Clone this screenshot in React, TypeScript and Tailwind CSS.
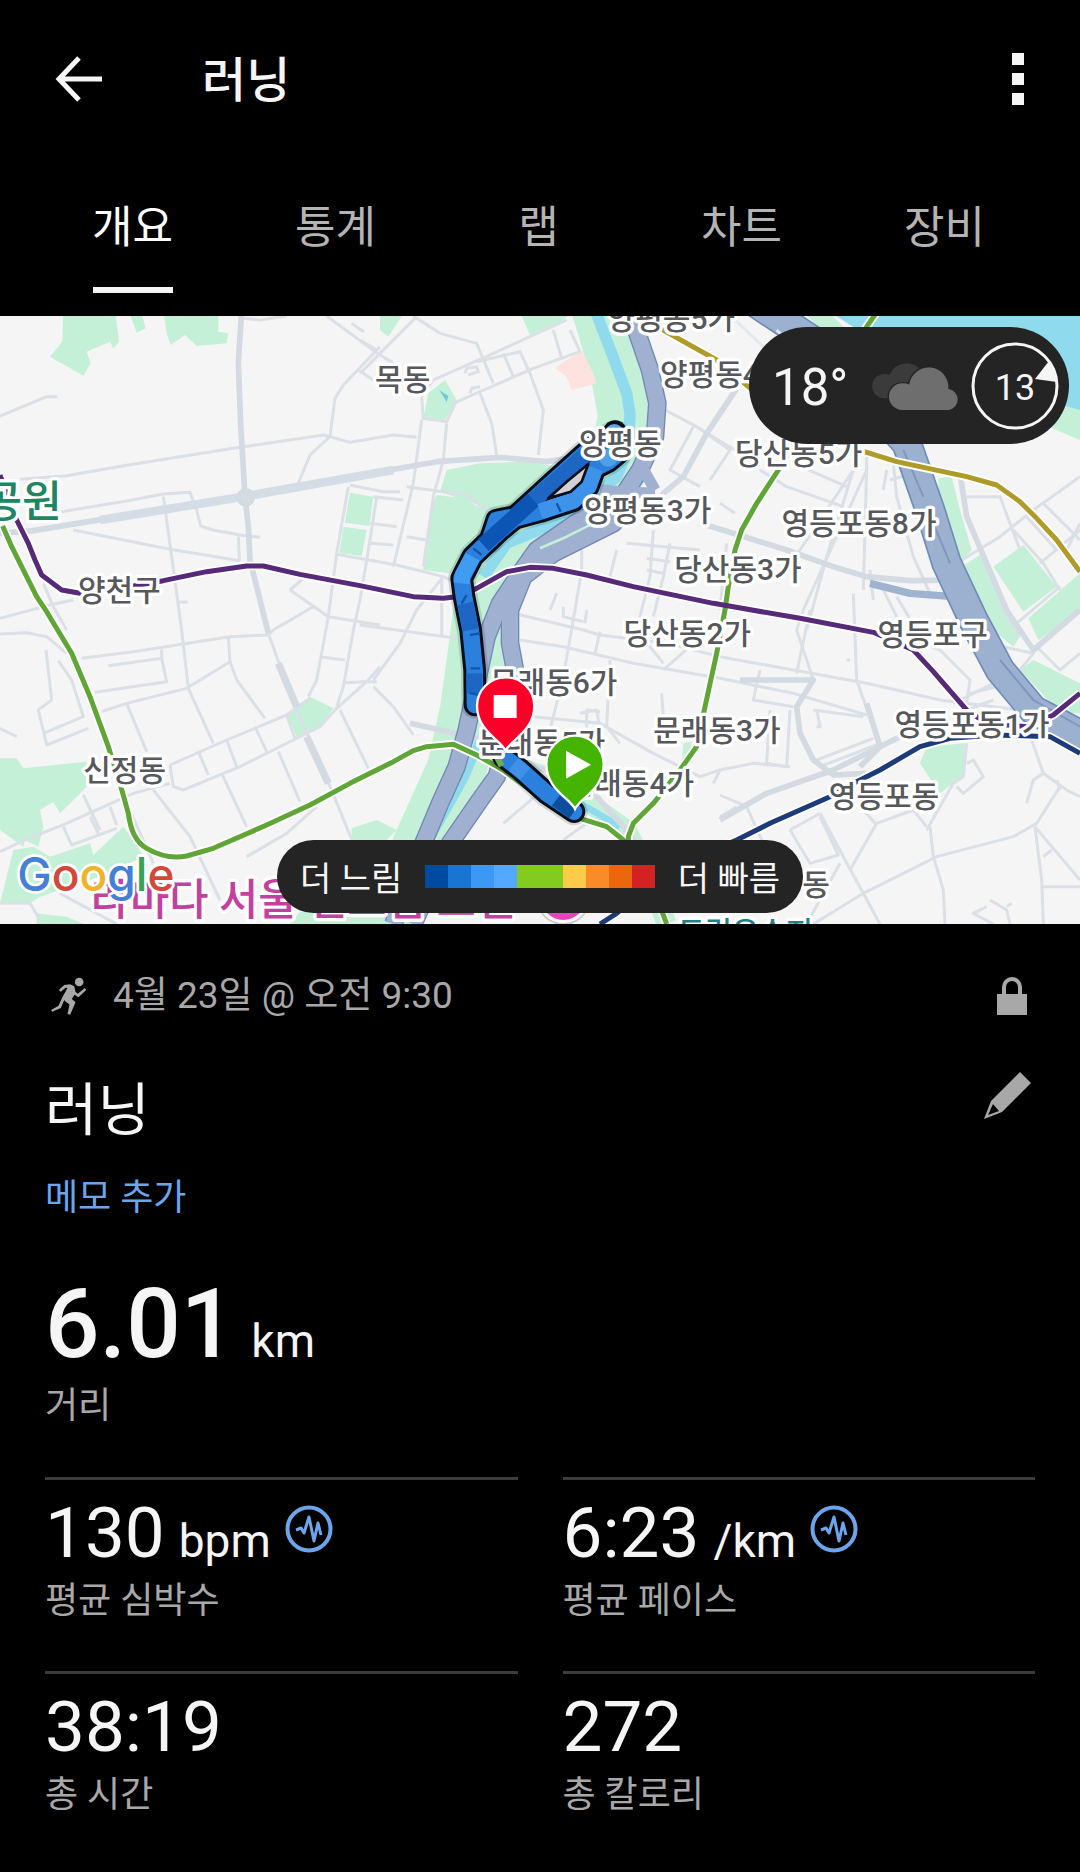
import React from 'react';

const TABS = ['개요', '통계', '랩', '차트', '장비'];

const PACE_COLORS = [
    '#004a9f', '#1a74d2', '#3d97f5', '#54a9ff', '#84cb20',
    '#84cb20', '#fbcb4b', '#fa8b29', '#eb660d', '#d42222',
];

const STATS = [
    { value: '130', unit: 'bpm', label: '평균 심박수', chart: true },
    { value: '6:23', unit: '/km', label: '평균 페이스', chart: true },
    { value: '38:19', unit: '', label: '총 시간', chart: false },
    { value: '272', unit: '', label: '총 칼로리', chart: false },
];

// Map geometry, three units per screen pixel
const PARKS = [
    '190,0 345,0 357,95 340,115 330,95 260,125 272,160 250,197 150,140 187,95',
    '385,0 422,0 437,55 410,68',
    '490,0 655,0 655,65 685,70 680,100 590,108 555,75 512,105 500,70',
    '1050,548 1120,560 1108,648 1035,638',
    '1030,650 1100,660 1085,738 1018,728',
    '1140,18 1205,18 1165,80 1140,60',
    '1565,18 1705,18 1680,35 1590,75',
    '1335,210 1370,270 1335,330 1270,325 1285,250',
    '1340,480 1440,460 1570,455 1680,470 1540,590 1480,610 1450,590 1320,545',
    '1310,555 1390,565 1470,610 1440,680 1350,790 1270,780 1290,600',
    '0,1345 50,1345 70,1375 260,1355 260,1430 180,1510 160,1475 120,1500 130,1550 115,1610 75,1590 70,1610 0,1560',
    '0,1780 40,1620 100,1610 150,1640 270,1600 280,1635 370,1550 400,1590 430,1640 300,1700 120,1760 90,1780',
    '110,1842 110,1810 200,1820 250,1842',
    '860,1210 930,1160 1000,1195 960,1250 890,1280',
    '1055,1555 1130,1530 1190,1560 1150,1600 1055,1600',
    '870,1842 900,1805 1080,1805 1200,1842',
    '2400,0 2480,0 2560,80 2480,70',
    '3120,340 3140,280 3240,295 3240,390',
    '2815,505 2855,500 2880,600 2915,720 2880,760 2850,700 2815,580',
    '2885,770 2940,735 2985,810 3020,880 3060,980 3040,1010 2990,970 2930,850',
    '2980,770 3070,705 3170,830 3070,905',
    '3085,925 3240,790 3240,905 3115,990',
    '3060,1080 3100,1050 3240,1120 3240,1210 3180,1210',
    '2780,1310 2895,1300 2890,1400 2860,1420 2820,1450 2780,1390 2760,1360',
    '2050,1300 2075,1295 2065,1370 2045,1370',
    '1550,1340 1650,1370 1600,1400',
];

const MAIN_ROADS = [
    'M0 670 100 662 490 598 730 560 1040 505 1140 485 1310 455 1500 442 1640 455 1740 440',
    'M725 0 715 160 722 340 735 560 745 650 750 750 760 790 805 970',
    'M2100 640 2200 670 2360 720 2500 770 2600 800 2730 812 2860 810',
    'M2240 190 2120 370 2050 500 1990 550 1940 620',
    'M2220 1110 2440 1110 2390 1190 2400 1270 2440 1350 2500 1395 2600 1390',
    'M1230 1240 1500 1300',
    'M2160 1530 2300 1450 2500 1380 2700 1280',
    'M1500 1345 1640 1380 1790 1460 1880 1560 1940 1640',
    'M2880 490 2900 620 2960 760 3020 900 3100 1020 3240 900',
    'M2600 1180 2640 1310 2580 1370',
];

const MINOR_ROADS = [
    'M0 318 140 260 172 260',
    'M60 508 200 497 380 466 700 415 970 375 1050 397 1180 375 1250 382',
    'M185 605 380 573 490 552 570 547 590 600 602 648 640 660 720 675 780 682',
    'M490 560 515 740 545 960 565 1135 640 1300',
    'M220 660 510 718 720 752',
    'M715 680 718 752',
    'M980 18 1125 125 1180 160',
    'M730 25 780 30 860 18',
    'M1140 110 1030 225 1005 265 990 380 930 435 895 520',
    'M1055 40 1092 66',
    'M1075 180 1120 210',
    'M1050 525 1150 545 1200 545',
    'M1045 530 1010 730 985 920 950 1110 925 1160',
    'M1130 560 1110 690 1080 870 1060 960 1030 1130 1010 1190',
    'M1010 733 1190 765 1330 800 1370 820',
    'M870 840 985 920 1140 945',
    'M870 840 905 810',
    'M940 890 820 960 805 975 690 980 400 1025 245 1045',
    'M0 925 150 885 220 870',
    'M130 820 160 890 200 960',
    'M530 877 563 876',
    'M0 972 80 968 140 980 200 1030',
    'M138 1020 155 1170 115 1200 140 1305 265 1255',
    'M175 1052 215 1110 250 1220 130 1270',
    'M325 1067 485 1045 500 1115 285 1147',
    'M485 1018 485 1045',
    'M305 1205 380 1180 560 1135 690 1055 685 980',
    'M690 1055 710 1110 795 1225',
    'M805 970 880 1180 930 1290 990 1430 1060 1600',
    'M380 1180 440 1325',
    'M510 1365 680 1290 860 1215 930 1165',
    'M510 1365 520 1430 550 1440 720 1370 880 1290 960 1250 1010 1195 1100 1115 1140 1070',
    'M595 1325 625 1395 M680 1290 710 1370 M765 1250 800 1325 M860 1215 885 1285',
    'M665 1390 740 1550 M835 1325 900 1475 M1020 1200 1105 1375',
    'M0 1625 75 1590 200 1540 400 1450 510 1420',
    'M190 1550 215 1605 350 1555 M270 1520 295 1570 M330 1490 350 1545',
    'M250 1455 300 1560 M460 1440 570 1580 660 1770 M385 1490 460 1660',
    'M740 1640 860 1570 950 1490',
    'M0 1255 50 1280',
    'M0 1780 90 1780 120 1830 M180 1750 350 1842',
    'M960 1040 1035 1050 M1030 1118 1100 1115',
    'M1080 190 1250 20 M1080 90 1130 120',
    'M1240 18 1320 70 1430 100 1480 220',
    'M1270 330 1265 260 1300 210 1480 130 1700 30',
    'M1360 280 1440 245 1600 175 1740 125 1710 60',
    'M1510 130 1540 200 M1430 155 1560 125 1590 190 1630 300 1615 435',
    'M1265 330 1240 520 1180 770 M1340 340 1330 450 1300 560 1270 770',
    'M1440 250 1475 340 1490 435 M1270 325 1340 335 1370 270',
    'M1395 190 1400 175 1430 170 1435 185 1405 195 M1410 250 1415 235 1440 230',
    'M1120 560 1210 570 M1110 640 1190 650 M1110 700 1180 705 M1220 530 1400 555 1470 610',
    'M1660 60 1685 145 M1220 680 1280 690',
    'M1325 800 1325 980 M1330 800 1250 900 1200 1000 1120 1110 M1080 945 1370 985',
    'M1120 1130 1180 1190 1240 1275 M1080 1115 1130 1115',
    'M1745 680 1745 780 1725 900 1690 1100 1640 1300 M1850 720 1830 800 M1670 850 1650 900',
    'M1995 300 2090 350 2220 430 M2080 350 2010 480 2100 530 M2090 350 2190 420 2130 510',
    'M1960 660 1950 800 1910 960 1990 1060 M2010 700 1990 800 1960 920',
    'M1940 745 2010 755 M1940 780 1990 790 M1880 700 2100 720',
    'M1540 910 1750 960 1800 975 2000 1000 2160 1040 2380 1080 2600 1120 2820 1170 3060 1200',
    'M1560 990 1690 1010 1900 1060 2160 1105 2380 1150 2600 1215',
    'M1760 900 1755 940 M1690 890 1690 920 1750 935 M1800 965 1785 1030',
    'M1830 1050 1820 1250 1860 1300 M1600 1220 1800 1240 1960 1330 2100 1400 2160 1380',
    'M1985 1150 1990 1220 M1740 1210 1790 1200 1800 1260 M1990 1080 2080 1000 2100 960',
    'M1760 1270 1760 1200 1800 1205 M2140 1420 2160 1380 2260 1360 2370 1370',
    'M1510 1540 1640 1430 M1690 1590 1760 1540',
    'M2380 750 2560 480 M2440 1110 2390 960 2410 900 2600 480 2600 440',
    'M2420 960 2480 740 2560 480 M2590 840 2600 470 M2660 480 2650 540 M2670 510 2720 495',
    'M2280 480 2360 530 2530 590 M2380 460 2540 530 M2160 580 2205 610',
    'M2560 850 2570 1110 2640 1310 M2610 780 2620 870 M2680 460 2690 560 2740 740 2790 850',
    'M2690 860 2750 960 M2640 820 2720 980 2820 1020 2910 1110 2900 1180',
    'M2180 700 2160 900 M2430 900 2390 1090 M2380 1190 2260 1170 2280 1080',
    'M2440 1200 2590 1220 M2450 1250 2460 1250 2450 1200 M2310 1200 2300 1360 2360 1370 2370 1200',
    'M2450 1350 2620 1285 M2460 1370 2640 1300 M2540 1050 2550 1050',
    'M2160 1455 2240 1490 2290 1600 M2160 1520 2210 1490 M2370 1560 2430 1660 2515 1635 2460 1520',
    'M2460 1510 2530 1640 2640 1842 M2370 1560 2460 1510 M2550 1680 2630 1540 2740 1500 2780 1550',
    'M2590 1500 2630 1545 M2780 1560 2860 1420 2890 1400 2900 1300',
    'M2790 1550 2800 1640 2830 1740 2835 1842 M2440 1842 2590 1750 2810 1640 3040 1580 3110 1540 3180 1430',
    'M2870 1430 2890 1450 2950 1400 2920 1350 2900 1360',
    'M3095 1290 3130 1390 3200 1440 3240 1460 M3130 1390 3100 1410 3080 1480 M3170 1410 3180 1440',
    'M3105 1550 3240 1710 M3105 1550 3125 1710 3130 1842 M3125 1730 3240 1730 M3130 1640 3155 1620',
    'M2970 1770 3020 1800 3030 1842 M3020 1790 3035 1780 M2960 1790 2920 1810 2980 1842 M2520 1660 2420 1842',
    'M2870 760 3000 680 3100 600 3240 500 M2900 560 3000 560 3060 720',
    'M3040 660 3130 760 3180 840 M3080 620 3170 720 M3120 760 3240 660 M3130 580 3240 690',
    'M3110 1010 3180 1080 3240 1030 M2960 1000 3100 1030 3060 1080 M2860 1180 3000 1110 M3240 640 3200 720',
    'M2910 1150 2990 1130 M2900 1200 2980 1170',
    'M3000 880 3060 980 M3180 830 3050 940',
];

const HIGHWAYS = [
    'M1895 20 1950 180 1972 280 1965 380 1920 480 1860 570 1740 630 1610 720 1560 790 1500 880 1460 980 1430 1120 1400 1260 1370 1370 1320 1480 1270 1600 1180 1842',
    'M1880 600 1840 640 1780 670 1660 730 1570 800 1530 900 1530 1000 1545 1080 1530 1260 1490 1400 1440 1470 1350 1600 1240 1842',
];

const RIVER_ROAD = 'M2270 -20 2450 100 2720 400 2790 600 2840 760 2920 930 3000 1080 3100 1200 3270 1290';

const LINES = [
    {
        color: '#60a637',
        d: 'M8 648 35 710 75 790 110 860 140 905 215 1030 270 1160 325 1310 360 1420 385 1510Q395 1590 440 1615 500 1650 560 1638L640 1615 800 1545 930 1485 1050 1420 1180 1355 1240 1322 1280 1310 1360 1303 1430 1335 1510 1380 1590 1440 1730 1522 1820 1550 1870 1590 1940 1680 2000 1842',
    },
    {
        color: '#60a637',
        d: 'M1885 1610 1885 1580 1900 1540 1960 1480 2040 1380 2090 1310 2115 1190 2150 1030 2175 900 2185 830 2205 720 2225 660 2270 580 2335 480 2480 250 2600 50 2635 0',
    },
    {
        color: '#562a78',
        d: 'M0 495 50 630 85 700 105 750 125 795 185 840 240 850 400 828 490 812 620 785 740 768 790 768 900 793 1080 827 1240 860 1330 865 1370 860 1430 835 1520 785 1590 772 1660 775 1760 795 1900 830 2140 880 2400 925 2620 967 2740 1020 2800 1085 2900 1200 2960 1240 3080 1250 3160 1215 3240 1150',
    },
    { color: '#ae9b29', d: 'M1980 55 2150 150 2400 360 2600 427 2690 455 2900 500 2990 525 3060 575 3110 625 3170 690 3240 785' },
    { color: '#1d3a79', d: 'M1800 1842 1850 1810 2000 1680 2210 1590 2310 1540 2490 1460 2570 1415 2640 1380 2760 1310 2850 1285 2990 1275 3150 1280 3240 1330' },
];

const PLACES = [
    { name: '목동', x: 1208, y: 240 },
    { name: '양평동5가', x: 2014, y: 56 },
    { name: '양평동4가', x: 2171, y: 224 },
    { name: '양평동', x: 1861, y: 432 },
    { name: '양평동3가', x: 1943, y: 632 },
    { name: '당산동5가', x: 2396, y: 462 },
    { name: '영등포동8가', x: 2577, y: 672 },
    { name: '당산동3가', x: 2214, y: 810 },
    { name: '당산동2가', x: 2062, y: 1002 },
    { name: '영등포구', x: 2798, y: 1006 },
    { name: '양천구', x: 358, y: 874 },
    { name: '신정동', x: 374, y: 1412 },
    { name: '문래동6가', x: 1661, y: 1148 },
    { name: '문래동5가', x: 1625, y: 1330 },
    { name: '문래동3가', x: 2151, y: 1294 },
    { name: '문래동4가', x: 1891, y: 1452 },
    { name: '영등포동1가', x: 2916, y: 1274 },
    { name: '영등포동', x: 2652, y: 1492 },
    { name: '동', x: 2448, y: 1756 },
];

const ROUTE = [
    'M1425 1185 1424 1080 1412 960 1392 860 1385 805 1418 740 1470 690 1545 620 1660 515 1760 425 1800 395 1845 370 1855 430 1825 455 1785 475 1765 530 1720 572 1620 605 1545 625 1490 670',
    'M1470 690 1490 630 1515 625 1545 620',
    'M1510 1340 1560 1378 1640 1450 1722 1505',
];

const ROUTE_PARTS = [
    { color: '#1d66c4', d: 'M1424 1150 1423 1090 M1412 960 1396 880 M1545 620 1800 395' },
    { color: '#0c55b4', d: 'M1450 705 1545 620 1600 570' },
    { color: '#409bf2', d: 'M1385 820 1388 795 1418 740' },
    { color: '#3f92ea', d: 'M1785 475 1765 530 1720 572 1620 605' },
    { color: '#0d4f9f', d: 'M1670 1468 1722 1505' },
    { color: '#3f90e6', d: 'M1540 1362 1575 1392' },
];

const ActivityMap: React.FC = () => (
    <svg
        className="block h-full w-full"
        viewBox="0 18 3240 1824"
        preserveAspectRatio="xMidYMid slice"
        role="img"
        aria-label="러닝 경로 지도"
    >
        <rect width="3240" height="1860" fill="#f5f5f5" />
        <g fill="none" strokeLinejoin="round">
            <path d="M1800 -20 1860 180 1885 320 1850 480 1740 590 1560 680 1460 820 1440 980 1410 1200 1370 1380 1270 1600 1160 1860" stroke="#c3f0d6" strokeWidth="180" />
            <path d="M1785 0 1835 130 1880 250 1890 310 1885 420 1850 500 1770 570 1640 650 1520 700 1450 800" stroke="#8fdaed" strokeWidth="34" />
            <path d="M1440 1290 1395 1400 1345 1490 1270 1620" stroke="#8fdaed" strokeWidth="26" />
            <path d="M1640 1400 1740 1460 1880 1560 1940 1680 2000 1842" stroke="#c3f0d6" strokeWidth="60" />
            <path d="M1740 1480 1860 1550" stroke="#8fdaed" strokeWidth="20" />
        </g>
        {PARKS.map((points) => (
            <polygon key={points} points={points} fill="#c3f0d6" />
        ))}
        <polygon points="1665,175 1745,120 1780,190 1790,220 1715,240 1700,200" fill="#fde2df" />
        <polygon points="2480,0 3240,0 3240,300 3150,275 2700,140" fill="#8fdaed" />
        <polygon points="1318,240 1345,258 1340,276" fill="#6fc9dd" />
        <g fill="none" strokeLinejoin="round">
            <g stroke="#dbdfe6" strokeWidth="9">
                {MINOR_ROADS.map((d) => <path key={d} d={d} />)}
            </g>
            <g stroke="#d4dae2" strokeWidth="17">
                {MAIN_ROADS.map((d) => <path key={d} d={d} />)}
            </g>
            <path d="M300 630 730 560 1180 480" stroke="#d4dde5" strokeWidth="26" />
            <circle cx="737" cy="562" r="20" stroke="#d4dae2" strokeWidth="16" />
            <path d="M835 1060 890 1190 M920 1280 985 1420" stroke="#d4dae2" strokeWidth="22" />
            <path d="M2610 820 2730 850 2860 860" stroke="#9fb2d0" strokeWidth="22" />
            {HIGHWAYS.map((d) => <path key={d} d={d} stroke="#7189b3" strokeWidth="56" />)}
            {HIGHWAYS.map((d) => <path key={d} d={d} stroke="#a0b0d0" strokeWidth="48" />)}
            <path d="M1800 540 1850 545 1965 550 M1925 470 1965 540" stroke="#a0b0d0" strokeWidth="34" />
            <path d="M1620 715 1700 680 1780 640" stroke="#c3f0d6" strokeWidth="8" />
            <path d={RIVER_ROAD} stroke="#6f8cb8" strokeWidth="92" />
            <path d={RIVER_ROAD} stroke="#9cb0d0" strokeWidth="82" />
            <path d="M2710 420 2770 560 M2800 640 2850 760 M3000 1050 3100 1170 3240 1250" stroke="#7f97c0" strokeWidth="6" />
            <path d="M2205 30 2290 110 M2330 60 2360 90 2320 80" stroke="#e4e9f1" strokeWidth="9" />
            {LINES.map((line) => <path key={line.d} d={line.d} stroke="#ffffff" strokeWidth="26" />)}
            {LINES.map((line) => <path key={line.d} d={line.d} stroke={line.color} strokeWidth="15" />)}
        </g>

        {/* Recorded track */}
        <g fill="none" strokeLinecap="round" strokeLinejoin="round">
            {ROUTE.map((d) => <path key={d} d={d} stroke="#00000022" strokeWidth="82" />)}
            {ROUTE.map((d) => <path key={d} d={d} stroke="#050f1c" strokeWidth="68" />)}
            <circle cx="1845" cy="368" r="37" fill="#050f1c" />
            <circle cx="1825" cy="445" r="37" fill="#050f1c" />
            {ROUTE.map((d) => <path key={d} d={d} stroke="#2c80dd" strokeWidth="50" />)}
        </g>
        <g fill="none">
            {ROUTE_PARTS.map((part) => (
                <path key={part.d} d={part.d} stroke={part.color} strokeWidth="48" strokeLinejoin="round" />
            ))}
            <circle cx="1843" cy="370" r="28" fill="#5ea6df" />
            <circle cx="1825" cy="442" r="28" fill="#4d9fe8" />
            <path d="M1645 565 1700 515 1765 462 1745 515 1712 545Z" fill="#d5d1d2" stroke="#050f1c" strokeWidth="8" strokeLinejoin="round" />
            <path d="M1410 975 1440 970 M1412 1075 1440 1075 M1410 1150 1442 1155 M1400 855 1385 880 M1420 715 1445 735 M1670 580 1682 605" stroke="#0f55ac" strokeWidth="7" />
            <path d="M1490 1340 1505 1368" stroke="#6fae52" strokeWidth="18" />
        </g>

        <g
            fontFamily="Roboto, 'Noto Sans CJK KR', sans-serif"
            stroke="#ffffff"
            strokeWidth="20"
            strokeLinejoin="round"
            paintOrder="stroke"
        >
            <g fontSize="90" fontWeight="500" fill="#56585c" textAnchor="middle">
                {PLACES.map((place) => (
                    <text key={place.name} x={place.x} y={place.y}>{place.name}</text>
                ))}
            </g>
            <text x="66" y="622" fontSize="130" fontWeight="500" fill="#208661" textAnchor="middle">공원</text>
            <text x="272" y="1814" fontSize="128" fontWeight="500" fill="#c4409f">라마다 서울 신도림 호텔</text>
            <text x="2034" y="1898" fontSize="88" fontWeight="500" fill="#238089">도림유수지</text>
        </g>
        <circle cx="1690" cy="1762" r="80" fill="#ffffff" stroke="#c9c9c9" strokeWidth="5" />
        <circle cx="1690" cy="1762" r="68" fill="#e645ba" />

        {/* Finish and start pins */}
        <g stroke="#ffffff" strokeWidth="7">
            <path d="M1517 1322C1502 1290 1431 1262 1431 1188A86 86 0 1 1 1603 1188C1603 1262 1532 1290 1517 1322Z" fill="#fb0029" />
            <path d="M1725 1497C1710 1465 1639 1437 1639 1363A86 86 0 1 1 1811 1363C1811 1437 1740 1465 1725 1497Z" fill="#45b400" />
        </g>
        <rect x="1481" y="1155" width="69" height="69" fill="#ffffff" />
        <path d="M1698 1322 1773 1364 1698 1406Z" fill="#ffffff" />

        <text
            x="52"
            y="1742"
            fontFamily="Inter, sans-serif"
            fontSize="138"
            fontWeight="500"
            stroke="#ffffff"
            strokeWidth="16"
            strokeLinejoin="round"
            paintOrder="stroke"
        >
            <tspan fill="#4580d8">G</tspan>
            <tspan fill="#d2493a">o</tspan>
            <tspan fill="#efb429">o</tspan>
            <tspan fill="#4580d8">g</tspan>
            <tspan fill="#35a457">l</tspan>
            <tspan fill="#d2493a">e</tspan>
        </text>
    </svg>
);

const PulseIcon: React.FC = () => (
    <svg className="h-[48px] w-[48px]" viewBox="0 0 48 48" fill="none" stroke="#6ba6ec" aria-hidden="true">
        <circle cx="24" cy="24" r="21.5" strokeWidth="4" />
        <path d="M11 25 16 23 19 28 24 12 29 36 33 18 36 30" strokeWidth="3" strokeLinejoin="round" />
    </svg>
);

const CloudIcon: React.FC = () => (
    <svg className="h-[50px] w-[88px]" viewBox="453 152 264 150" aria-hidden="true">
        <path d="M490 264a36 36 0 0 1 0-73q12 0 16 2a54 54 0 0 1 94-12L540 264Z" fill="#3b3b3b" />
        <path
            d="M545 301a42 42 0 0 1-2-84q14-1 20 3a61 61 0 0 1 121 14 34 34 0 0 1 0 67Z"
            fill="#6e6e6e"
            stroke="#242424"
            strokeWidth="4"
        />
    </svg>
);

export default function App() {
    return (
        <div className="min-h-screen bg-black font-[Roboto,'Noto_Sans_CJK_KR',sans-serif] text-[#f5f5f5]">
            <header className="flex h-[158px] items-center pr-[36px] pl-[54px]">
                <button type="button" aria-label="뒤로">
                    <svg className="h-[50px] w-[50px]" viewBox="0 0 50 50" fill="none" stroke="currentColor" strokeWidth="5">
                        <path d="M25 4 5 25 25 46M5 25H48" />
                    </svg>
                </button>
                <h1 className="ml-[98px] pt-1 text-[48px] leading-[64px] font-medium">러닝</h1>
                <button type="button" aria-label="더보기" className="ml-auto flex w-[52px] flex-col items-center gap-2">
                    <span className="h-3 w-3 bg-current" />
                    <span className="h-3 w-3 bg-current" />
                    <span className="h-3 w-3 bg-current" />
                </button>
            </header>

            <nav className="grid h-[158px] grid-cols-5 pt-[38px] pr-[34px] pl-[31px]">
                {TABS.map((tab, index) => (
                    <button
                        key={tab}
                        type="button"
                        className={
                            index === 0
                                ? 'flex flex-col items-center text-[44px] leading-[64px] text-white'
                                : 'flex flex-col items-center text-[44px] leading-[64px] text-[#b4b4b4]'
                        }
                    >
                        {tab}
                        {index === 0 && <span className="mt-[27px] h-[6px] w-[80px] bg-[#f5f5f5]" />}
                    </button>
                ))}
            </nav>

            <section className="relative h-[608px] overflow-hidden">
                <ActivityMap />

                <div className="absolute top-[11px] right-[11px] flex h-[117px] w-[320px] items-center rounded-full bg-[#242424] pr-[10px] pl-[23px]">
                    <span className="pt-1 text-[51px] leading-[64px]">18°</span>
                    <span className="ml-auto"><CloudIcon /></span>
                    <div className="relative ml-[11px] flex h-[88px] w-[88px] items-center justify-center">
                        <svg className="absolute inset-0 h-full w-full" viewBox="0 0 88 88" aria-hidden="true">
                            <circle cx="44" cy="44" r="42" fill="none" stroke="#f5f5f5" strokeWidth="3" />
                            <path d="M78 19 64 37 86 40A43 43 0 0 0 78 19Z" fill="#f5f5f5" />
                        </svg>
                        <span className="pt-1 text-[36px] leading-[48px]">13</span>
                    </div>
                </div>

                <div className="absolute bottom-[11px] left-1/2 flex h-[73px] w-[526px] -translate-x-1/2 items-center justify-between rounded-full bg-[#242424] px-[23px] text-[34px] leading-[48px]">
                    <span className="pt-1">더 느림</span>
                    <div className="flex">
                        {PACE_COLORS.map((color, index) => (
                            <span key={index} className="h-[23px] w-[23px]" style={{ backgroundColor: color }} />
                        ))}
                    </div>
                    <span className="pt-1">더 빠름</span>
                </div>
            </section>

            <main className="px-[45px] pt-12">
                <div className="flex h-12 items-center text-[#a8a8a8]">
                    <svg className="h-[40px] w-[42px]" viewBox="15 45 125 120" fill="currentColor" aria-hidden="true">
                        <circle cx="117" cy="63" r="13" />
                        <path d="M56 87 72 72 90 70 102 76 106 92 113 98 134 81 138 87 115 109 103 101 95 114 106 124 90 161 82 159 88 131 72 118 62 141 36 152 33 147 55 134 67 108 82 81 76 80 62 92Z" />
                    </svg>
                    <p className="ml-[26px] text-[37px] leading-[48px]">4월 23일 @ 오전 9:30</p>
                    <svg className="mr-[7px] ml-auto h-[40px] w-[32px]" viewBox="0 0 32 40" fill="currentColor" aria-hidden="true">
                        <path d="M1 18H31V39H1Z" />
                        <path d="M8 20V11a8 8 0 0 1 16 0V20" fill="none" stroke="currentColor" strokeWidth="4" />
                    </svg>
                </div>

                <div className="mt-[52px] flex items-start justify-between">
                    <h2 className="pt-[3px] text-[57px] leading-[72px]">러닝</h2>
                    <button type="button" aria-label="이름 편집" className="mr-[4px] text-[#a8a8a8]">
                        <svg className="h-[47px] w-[47px]" viewBox="0 0 47 47" fill="currentColor">
                            <path d="M36 0 47 11 18 40 0 47 7 29ZM9 32 4 43 15 39Z" fillRule="evenodd" />
                        </svg>
                    </button>
                </div>

                <a href="#memo" className="mt-[27px] block text-[36px] leading-[48px] text-[#6ba6ec]">메모 추가</a>

                <div className="mt-[54px]">
                    <p className="flex items-baseline gap-[16px] text-[96px] leading-[96px] font-medium">
                        6.01
                        <span className="text-[46px] leading-[48px] font-normal">km</span>
                    </p>
                    <p className="mt-[10px] text-[36px] leading-[48px] text-[#a8a8a8]">거리</p>
                </div>

                <div className="mt-[47px] grid grid-cols-2 gap-x-[45px]">
                    {STATS.map((stat) => (
                        <div key={stat.label} className="border-t-[3px] border-[#3c3c3c] pt-[17px] pb-[46px]">
                            <div className="flex h-[72px] items-start">
                                <p className="flex items-baseline gap-[14px] text-[71px] leading-[72px]">
                                    {stat.value}
                                    {stat.unit && <span className="text-[46px] leading-[48px]">{stat.unit}</span>}
                                </p>
                                {stat.chart && (
                                    <button type="button" aria-label={`${stat.label} 차트`} className="mt-[8px] ml-[14px]">
                                        <PulseIcon />
                                    </button>
                                )}
                            </div>
                            <p className="mt-[8px] text-[36px] leading-[48px] text-[#a8a8a8]">{stat.label}</p>
                        </div>
                    ))}
                </div>
            </main>
        </div>
    );
}
